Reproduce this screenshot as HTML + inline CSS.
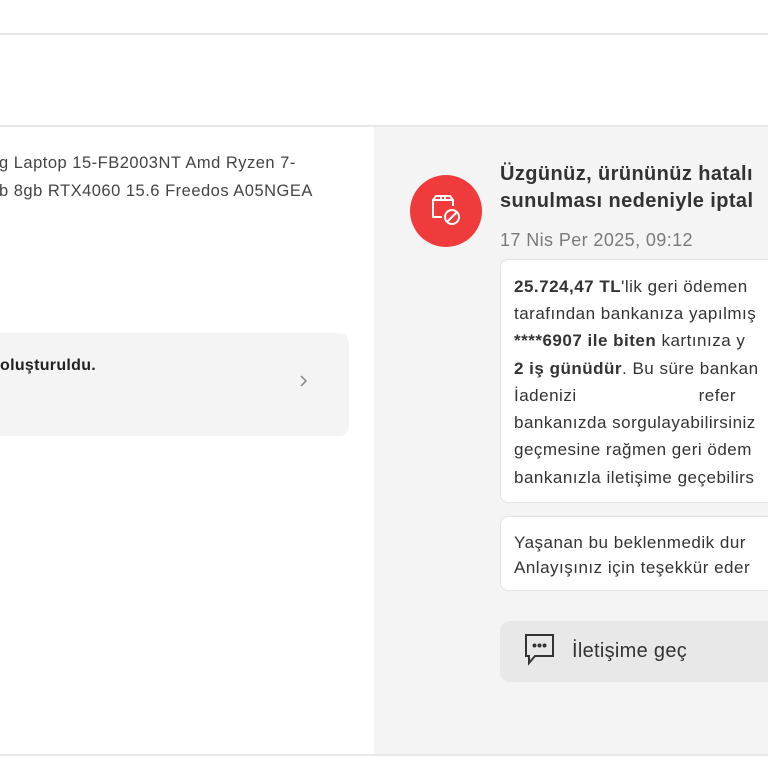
<!DOCTYPE html>
<html><head><meta charset="utf-8"><style>
*{margin:0;padding:0;box-sizing:border-box}
body{width:768px;height:768px;overflow:hidden;background:#fff;font-family:"Liberation Sans",sans-serif;color:#333;position:relative}
.a{position:absolute;white-space:nowrap}
.line{position:absolute;left:0;width:768px;height:2px;background:#e8e8e8}
.box{position:absolute;background:#fff;border:1px solid #e3e3e3;border-radius:8px;overflow:hidden}
.t{position:absolute;left:13px;font-size:17px;letter-spacing:0.5px;color:#333;white-space:nowrap}
b{font-weight:bold}
</style></head><body>
<div class="line" style="top:33px"></div>
<div class="line" style="top:125px"></div>
<div class="a" style="left:374px;top:127px;width:394px;height:628px;background:#f4f4f4"></div>
<div class="line" style="top:754px"></div>

<div class="a" style="left:-1px;top:154px;font-size:16.5px;letter-spacing:0.5px;color:#444">g Laptop 15-FB2003NT Amd Ryzen 7-</div>
<div class="a" style="left:-1px;top:182px;font-size:16.5px;letter-spacing:0.5px;color:#444">b 8gb RTX4060 15.6 Freedos A05NGEA</div>

<div class="a" style="left:-10px;top:333px;width:359px;height:103px;background:#f4f4f4;border-radius:10px"></div>
<div class="a" style="left:0;top:357px;font-size:16px;letter-spacing:0.3px;font-weight:bold;color:#222">oluşturuldu.</div>
<svg class="a" style="left:298px;top:374px" width="12" height="14" viewBox="0 0 12 14"><path d="M3 2l5 5-5 5" fill="none" stroke="#888" stroke-width="1.5"/></svg>

<div class="a" style="left:410px;top:175px;width:72px;height:72px;border-radius:50%;background:#ef3b3b"></div>
<svg class="a" style="left:426px;top:191px" width="40" height="40" viewBox="0 0 40 40" fill="none" stroke="#fff" stroke-width="2" stroke-linejoin="round">
<path d="M16 26H7V9h20v6"/><path d="M7 9l3-4h14l3 4M15 5v4M19 5v4"/>
<circle cx="26" cy="26" r="7"/><path d="M21.5 30.5l9-9"/></svg>

<div class="a" style="left:500px;top:163px;font-size:20px;letter-spacing:0.4px;font-weight:bold;color:#333">Üzgünüz, ürününüz hatalı</div>
<div class="a" style="left:500px;top:190px;font-size:20px;letter-spacing:0.4px;font-weight:bold;color:#333">sunulması nedeniyle iptal</div>
<div class="a" style="left:500px;top:230px;font-size:18px;letter-spacing:0.4px;color:#7a7a7a">17 Nis Per 2025, 09:12</div>

<div class="box" style="left:500px;top:259px;width:290px;height:244px">
<div class="t" style="top:17px"><b>25.724,47 TL</b>'lik geri ödemen</div>
<div class="t" style="top:44px">tarafından bankanıza yapılmış</div>
<div class="t" style="top:71px"><b>****6907 ile biten</b> kartınıza y</div>
<div class="t" style="top:99px"><b>2 iş günüdür</b>. Bu süre bankan</div>
<div class="t" style="top:126px">İadenizi<span style="display:inline-block;width:122px"></span>refer</div>
<div class="t" style="top:153px">bankanızda sorgulayabilirsiniz</div>
<div class="t" style="top:180px">geçmesine rağmen geri ödem</div>
<div class="t" style="top:208px">bankanızla iletişime geçebilirs</div>
</div>

<div class="box" style="left:500px;top:516px;width:290px;height:75px">
<div class="t" style="top:16px">Yaşanan bu beklenmedik dur</div>
<div class="t" style="top:41px">Anlayışınız için teşekkür eder</div>
</div>

<div class="a" style="left:500px;top:621px;width:290px;height:61px;background:#e8e8e8;border-radius:10px"></div>
<svg class="a" style="left:524px;top:633px" width="32" height="34" viewBox="0 0 32 34" fill="none" stroke="#333" stroke-width="2">
<path d="M2 2h27v21H11l-6 7v-7H2z"/><circle cx="10.5" cy="12.5" r="1" fill="#333"/><circle cx="15.5" cy="12.5" r="1" fill="#333"/><circle cx="20.5" cy="12.5" r="1" fill="#333"/></svg>
<div class="a" style="left:572px;top:640px;font-size:20px;letter-spacing:0.3px;color:#333">İletişime geç</div>
</body></html>
